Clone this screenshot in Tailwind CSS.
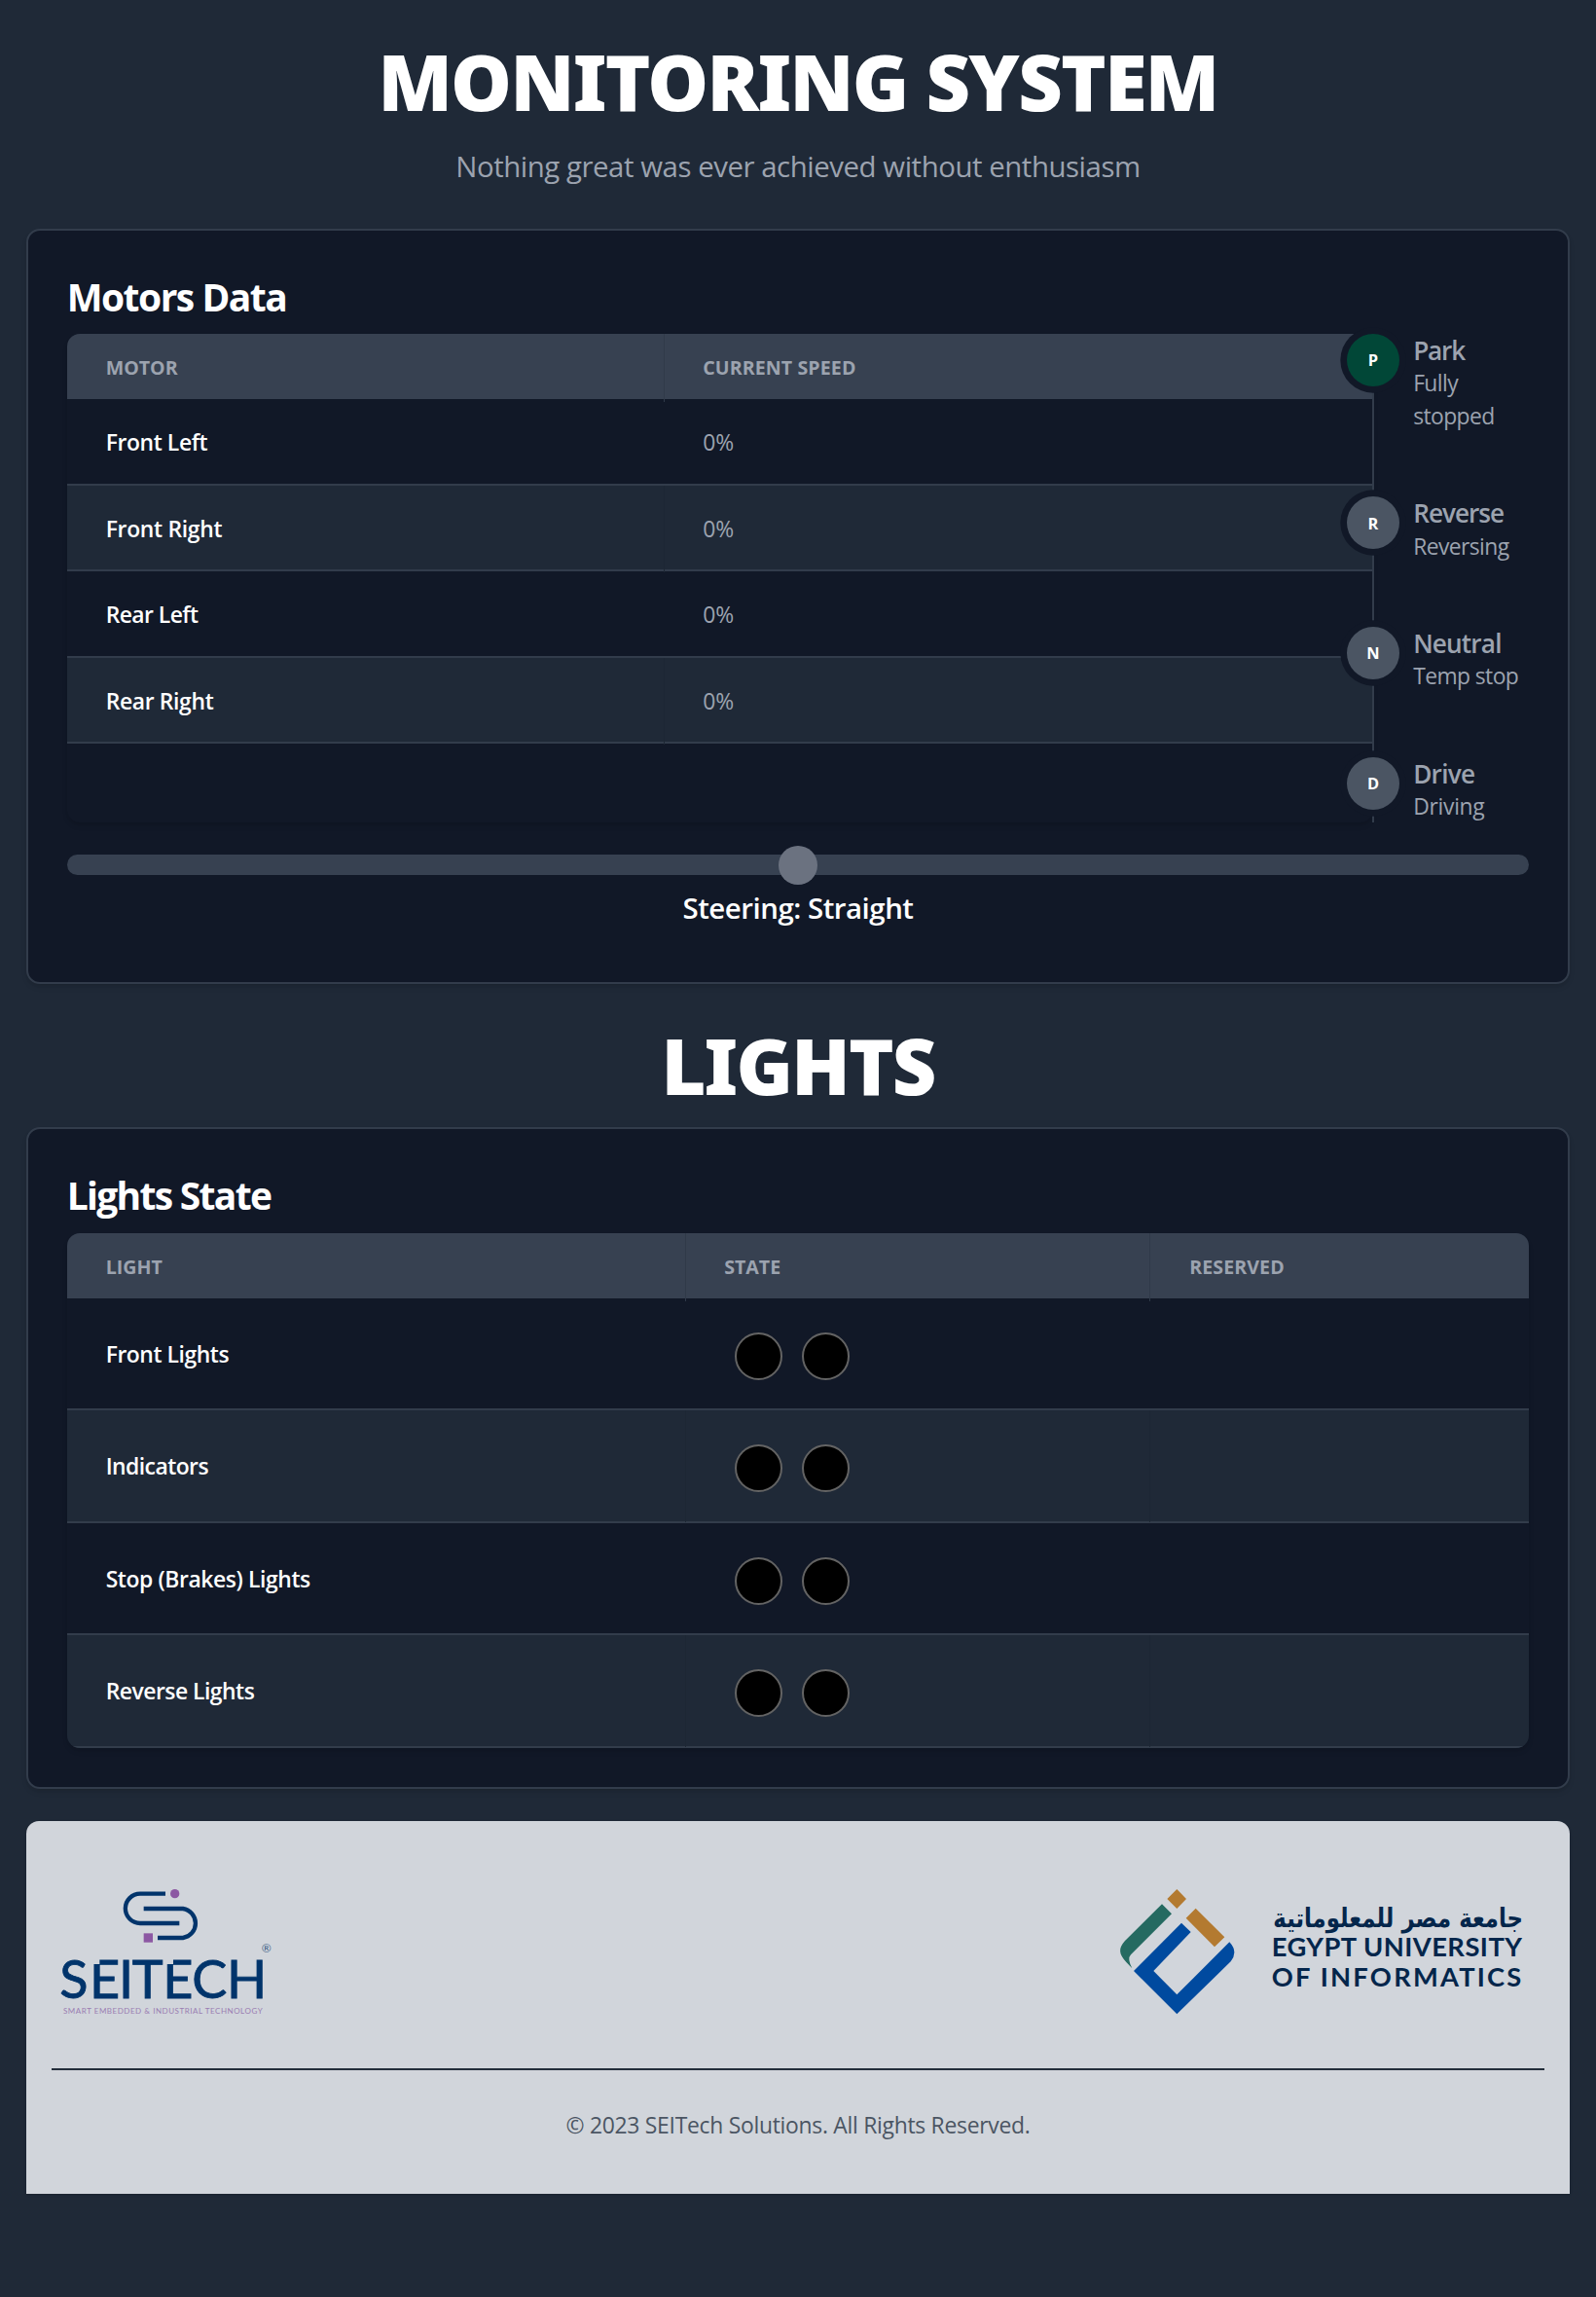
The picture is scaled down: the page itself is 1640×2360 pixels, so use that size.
<!DOCTYPE html>
<html lang="en">
<head>
<meta charset="utf-8">
<title>Monitoring System</title>
<script src="https://cdn.jsdelivr.net/npm/@tailwindcss/browser@4"></script>
</head>
<body class="min-h-[2360px] bg-[#1f2937] px-[26.67px] pt-[44px] font-['Open_Sans','Noto_Sans',sans-serif] text-[22.9px] text-[#9ca3af]">
<header class="flex flex-col items-center whitespace-nowrap">
  <h1 class="font-['Noto_Sans','Open_Sans',sans-serif] text-[79px] leading-[80px] font-black tracking-[-1.65px] text-white">MONITORING SYSTEM</h1>
  <p class="mt-[24px] mb-[40px] text-[29.4px] leading-[47px] tracking-[-0.45px]">Nothing great was ever achieved without enthusiasm</p>
</header>

<section class="h-[776px] rounded-[14px] border-2 border-[#323c4b] bg-[#111827] px-[40px] pt-[48px] shadow-md">
  <h2 class="mb-[18px] text-[39px] leading-[40px] font-bold tracking-[-1.5px] text-white">Motors Data</h2>
  <div class="flex h-[502px]">
    <div class="w-[1342px] shrink-0 overflow-hidden rounded-[13px] shadow-md">
      <div class="grid h-[67px] grid-cols-[614px_1fr] bg-[#374151] text-[19.6px] leading-[70px] font-bold">
        <div class="border-r border-[#303a49] px-[40px]">MOTOR</div><div class="px-[39.5px] tracking-[0.1px]">CURRENT SPEED</div>
      </div>
      <div class="grid h-[89px] grid-cols-[614px_1fr] border-b-2 border-[#323c4b] leading-[89px]">
        <div class="px-[40px] font-semibold tracking-[-0.4px] text-white">Front Left</div><div class="px-[39.5px]">0%</div>
      </div>
      <div class="grid h-[88px] grid-cols-[614px_1fr] border-b-2 border-[#323c4b] bg-[#1f2937] leading-[89px]">
        <div class="border-r border-[#1d2734] px-[40px] font-semibold tracking-[-0.3px] text-white">Front Right</div><div class="px-[39.5px]">0%</div>
      </div>
      <div class="grid h-[89px] grid-cols-[614px_1fr] border-b-2 border-[#323c4b] leading-[89px]">
        <div class="px-[40px] font-semibold tracking-[-0.55px] text-white">Rear Left</div><div class="px-[39.5px]">0%</div>
      </div>
      <div class="grid h-[88px] grid-cols-[614px_1fr] border-b-2 border-[#323c4b] bg-[#1f2937] leading-[89px]">
        <div class="border-r border-[#1d2734] px-[40px] font-semibold tracking-[-0.35px] text-white">Rear Right</div><div class="px-[39.5px]">0%</div>
      </div>
    </div>
    <ol class="-ml-[1px] flex-1 border-l-2 border-[#323c4b] pt-[1px] pl-[40.5px] leading-[33.4px] tracking-[-0.6px]">
      <li class="relative mb-[67px]">
        <span class="absolute -top-[1px] -left-[68.5px] flex size-[54px] items-center justify-center rounded-full bg-[#014737] text-[16.4px] font-bold text-white ring-[6.67px] ring-[#111827]">P</span>
        <h3 class="text-[26.2px] font-semibold tracking-[-1.2px]">Park</h3>
        <p>Fully<br>stopped</p>
      </li>
      <li class="relative mb-[67px]">
        <span class="absolute -top-[1px] -left-[68.5px] flex size-[54px] items-center justify-center rounded-full bg-[#4b5563] text-[16.4px] font-bold text-white ring-[6.67px] ring-[#111827]">R</span>
        <h3 class="text-[26.2px] font-semibold tracking-[-1px]">Reverse</h3>
        <p>Reversing</p>
      </li>
      <li class="relative mb-[67px]">
        <span class="absolute -top-[1px] -left-[68.5px] flex size-[54px] items-center justify-center rounded-full bg-[#4b5563] text-[16.4px] font-bold text-white ring-[6.67px] ring-[#111827]">N</span>
        <h3 class="text-[26.2px] font-semibold tracking-[-0.85px]">Neutral</h3>
        <p>Temp stop</p>
      </li>
      <li class="relative">
        <span class="absolute -top-[1px] -left-[68.5px] flex size-[54px] items-center justify-center rounded-full bg-[#4b5563] text-[16.4px] font-bold text-white ring-[6.67px] ring-[#111827]">D</span>
        <h3 class="text-[26.2px] font-semibold tracking-[-0.75px]">Drive</h3>
        <p class="tracking-[-0.3px]">Driving</p>
      </li>
    </ol>
  </div>
  <div class="mt-[33px] flex h-[21px] items-center justify-center rounded-full bg-[#374151]">
    <div class="size-[40px] shrink-0 rounded-full bg-[#6b7280]"></div>
  </div>
  <p class="mt-[11px] text-center text-[29.4px] leading-[47px] font-semibold tracking-[-0.47px] text-white">Steering: Straight</p>
</section>

<h1 class="mt-[44px] mb-[23px] text-center font-['Noto_Sans','Open_Sans',sans-serif] text-[79px] leading-[80px] font-black tracking-[-1.8px] text-white">LIGHTS</h1>

<section class="h-[680px] rounded-[14px] border-2 border-[#323c4b] bg-[#111827] px-[40px] pt-[48px] shadow-md">
  <h2 class="mb-[19px] text-[39px] leading-[40px] font-bold tracking-[-1.7px] text-white">Lights State</h2>
  <div class="overflow-hidden rounded-[13px] shadow-md">
    <div class="grid h-[67px] grid-cols-[636px_477px_1fr] bg-[#374151] text-[19.6px] leading-[70px] font-bold">
      <div class="border-r border-[#303a49] px-[40px]">LIGHT</div><div class="border-r border-[#303a49] px-[39.5px]">STATE</div><div class="px-[40.5px] tracking-[0.1px]">RESERVED</div>
    </div>
    <div class="grid h-[115px] grid-cols-[636px_477px_1fr] border-b-2 border-[#323c4b] leading-[115px]">
      <div class="px-[40px] font-semibold tracking-[-0.45px] text-white">Front Lights</div>
      <div class="flex items-center gap-[20px] pt-[3px] pl-[50.5px]"><i class="size-[49px] rounded-full border-2 border-[#636363] bg-black"></i><i class="size-[49px] rounded-full border-2 border-[#636363] bg-black"></i></div>
    </div>
    <div class="grid h-[116px] grid-cols-[636px_477px_1fr] border-b-2 border-[#323c4b] bg-[#1f2937] leading-[115px]">
      <div class="border-r border-[#1d2734] px-[40px] font-semibold tracking-[-0.55px] text-white">Indicators</div>
      <div class="flex items-center gap-[20px] border-r border-[#1d2734] pt-[4px] pl-[50.5px]"><i class="size-[49px] rounded-full border-2 border-[#636363] bg-black"></i><i class="size-[49px] rounded-full border-2 border-[#636363] bg-black"></i></div>
    </div>
    <div class="grid h-[115px] grid-cols-[636px_477px_1fr] border-b-2 border-[#323c4b] leading-[115px]">
      <div class="px-[40px] font-semibold tracking-[-0.4px] text-white">Stop (Brakes) Lights</div>
      <div class="flex items-center gap-[20px] pt-[4px] pl-[50.5px]"><i class="size-[49px] rounded-full border-2 border-[#636363] bg-black"></i><i class="size-[49px] rounded-full border-2 border-[#636363] bg-black"></i></div>
    </div>
    <div class="grid h-[116px] grid-cols-[636px_477px_1fr] border-b-2 border-[#323c4b] bg-[#1f2937] leading-[115px]">
      <div class="border-r border-[#1d2734] px-[40px] font-semibold tracking-[-0.5px] text-white">Reverse Lights</div>
      <div class="flex items-center gap-[20px] border-r border-[#1d2734] pt-[4px] pl-[50.5px]"><i class="size-[49px] rounded-full border-2 border-[#636363] bg-black"></i><i class="size-[49px] rounded-full border-2 border-[#636363] bg-black"></i></div>
    </div>
  </div>
</section>

<footer class="mt-[33px] h-[383px] rounded-t-[13px] bg-[#d1d5db] px-[26.67px] pt-[69px] text-[#4b5563] shadow-sm">
  <div class="flex justify-between pr-[19.5px] pl-[6.5px]">
    <svg class="h-[134px] w-[220px] overflow-visible" viewBox="60 60 660 402" fill="none">
      <path d="M390 77H312a45.500 45.500 0 0 0 0 91H433M323 123H444a45.500 45.500 0 0 1 0 90H366" stroke="#01346b" stroke-width="13"/>
      <circle cx="419" cy="77" r="14" fill="#8c58a3"/>
      <rect x="323" y="199" width="28" height="28" fill="#8c58a3"/>
      <text x="64 156 246 287 382 472 579" y="398" font-family="Lato" font-size="162" fill="#01346b" stroke="#01346b" stroke-width="2.500">SEITECH</text>
      <path d="M166 274h21v20h-21zM392 274h22v20h-22z" fill="#d1d5db"/>
      <text x="686" y="258" font-family="Lato" font-size="36" fill="#3b5b85">®</text>
      <text x="75" y="446" textLength="614" font-family="Lato" font-size="24" fill="#9a7db2">SMART EMBEDDED &amp; INDUSTRIAL TECHNOLOGY</text>
    </svg>
    <svg class="h-[130px] w-[417px] overflow-visible" viewBox="60 60 1251 390">
      <path d="M238 63l29 30-29 30-30-30zM296 122l89 89-31 30-88-89z" fill="#b37a30"/>
      <path d="M192 109l30 30L96 265q-12 12 4 42L82 288C60 264 56 246 78 222z" fill="#256a61"/>
      <path d="M252 167l29 28L166 315l72 73L400 226q28 30 4 60L238 448 105 315z" fill="#004a9f"/>
      <text x="920" y="181" text-anchor="middle" textLength="770" lengthAdjust="spacingAndGlyphs" font-family="DejaVu Sans" font-weight="700" font-size="82" fill="#04264b">جامعة مصر للمعلوماتية</text>
      <text x="530" y="270" textLength="772" font-family="Lato" font-weight="700" font-size="82" fill="#04264b">EGYPT UNIVERSITY</text>
      <text x="530" y="362" textLength="770" font-family="Lato" font-weight="700" font-size="82" fill="#04264b">OF INFORMATICS</text>
    </svg>
  </div>
  <hr class="mt-[51px] border-t-2 border-[#232d3a]">
  <p class="mt-[37px] text-center text-[22.9px] leading-[40px] tracking-[-0.28px]">© 2023 SEITech Solutions. All Rights Reserved.</p>
</footer>
</body>
</html>
